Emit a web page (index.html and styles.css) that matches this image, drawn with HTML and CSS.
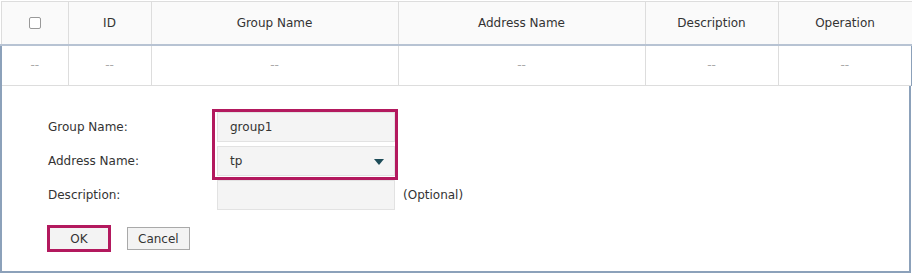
FILE: index.html
```
<!DOCTYPE html>
<html lang="en">
<head>
  <meta charset="UTF-8" />
  <title>Address Group</title>
  <link rel="stylesheet" href="styles.css">
</head>
<body>
<div class="page">
  <table class="grid">
    <thead>
      <tr>
        <th class="col-check"><span class="checkbox"></span></th>
        <th class="col-id">ID</th>
        <th class="col-group">Group Name</th>
        <th class="col-address">Address Name</th>
        <th class="col-desc">Description</th>
        <th class="col-op">Operation</th>
      </tr>
    </thead>
    <tbody>
      <tr>
        <td>--</td>
        <td>--</td>
        <td>--</td>
        <td>--</td>
        <td>--</td>
        <td>--</td>
      </tr>
    </tbody>
  </table>

  <div class="edit-panel">
    <div class="form-rows">
      <div class="form-row">
        <label class="form-label">Group Name:</label>
        <div class="text-box">group1</div>
      </div>
      <div class="form-row">
        <label class="form-label">Address Name:</label>
        <div class="text-box select-box">tp<span class="caret"></span></div>
      </div>
      <div class="form-row">
        <label class="form-label">Description:</label>
        <div class="text-box"></div>
        <span class="hint">(Optional)</span>
      </div>
      <!-- highlight around the two filled fields -->
      <div class="mark-box"></div>
    </div>

    <div class="button-row">
      <button class="btn btn-ok">OK</button>
      <button class="btn">Cancel</button>
    </div>
  </div>
</div>
</body>
</html>
```

FILE: styles.css
```
* { box-sizing: border-box; margin: 0; padding: 0; }
body {
  font-family: "DejaVu Sans", Verdana, sans-serif;
  font-size: 12px;
  color: #333;
  background: #fff;
}
.page {
  width: 912px;
  padding-top: 1px;
}

/* 목록 테이블 */
.grid {
  width: 911px;
  border-collapse: collapse;
  table-layout: fixed;
}
.grid th {
  height: 43px;
  background: #fafafa;
  font-weight: normal;
  color: #333;
  border: 1px solid #dddddd;
  border-bottom: 2px solid #b7c3d3;
}
.grid td {
  height: 41px;
  text-align: center;
  color: #aaa;
  border: 1px solid #dddddd;
}
.grid td:first-child { border-left: 2px solid #8ca1ba; }
.grid td:last-child { border-right: 2px solid #8ca1ba; }
.col-check { width: 67px; }
.col-id { width: 83px; }
.col-group { width: 247px; }
.col-address { width: 247px; }
.col-desc { width: 133px; }
.col-op { width: 134px; }

.checkbox {
  display: inline-block;
  width: 12px;
  height: 12px;
  border: 1px solid #999;
  border-radius: 2px;
  background: #fff;
  vertical-align: middle;
}

/* 편집 영역 */
.edit-panel {
  width: 911px;
  border-left: 2px solid #8ca1ba;
  border-right: 2px solid #8ca1ba;
  border-bottom: 2px solid #8ca1ba;
  padding: 26px 0 21px 46px;
}
.form-rows {
  position: relative;
  display: flex;
  flex-direction: column;
  gap: 4px;
}
.form-row {
  display: flex;
  align-items: center;
  height: 30px;
}
.form-label {
  width: 169px;
  color: #333;
}
.text-box {
  position: relative;
  width: 178px;
  height: 30px;
  line-height: 28px;
  padding-left: 12px;
  background: #f4f4f4;
  border: 1px solid #e2e2e2;
  color: #333;
}
.caret {
  position: absolute;
  right: 10px;
  top: 12px;
  border-left: 5px solid transparent;
  border-right: 5px solid transparent;
  border-top: 6px solid #1d4c58;
}
.hint {
  margin-left: 8px;
}
.mark-box {
  position: absolute;
  left: 164px;
  top: -3px;
  width: 186px;
  height: 71px;
  border: 3px solid #b3195e;
}

.button-row {
  display: flex;
  gap: 18px;
  margin-top: 17px;
  padding-left: 1px;
}
.btn {
  height: 23px;
  min-width: 60px;
  padding: 0 10px;
  font-family: inherit;
  font-size: 12px;
  color: #333;
  background: #f3f3f3;
  border: 1px solid #a9a9a9;
}
.btn-ok {
  outline: 3px solid #b3195e;
  outline-offset: -1px;
}
```
